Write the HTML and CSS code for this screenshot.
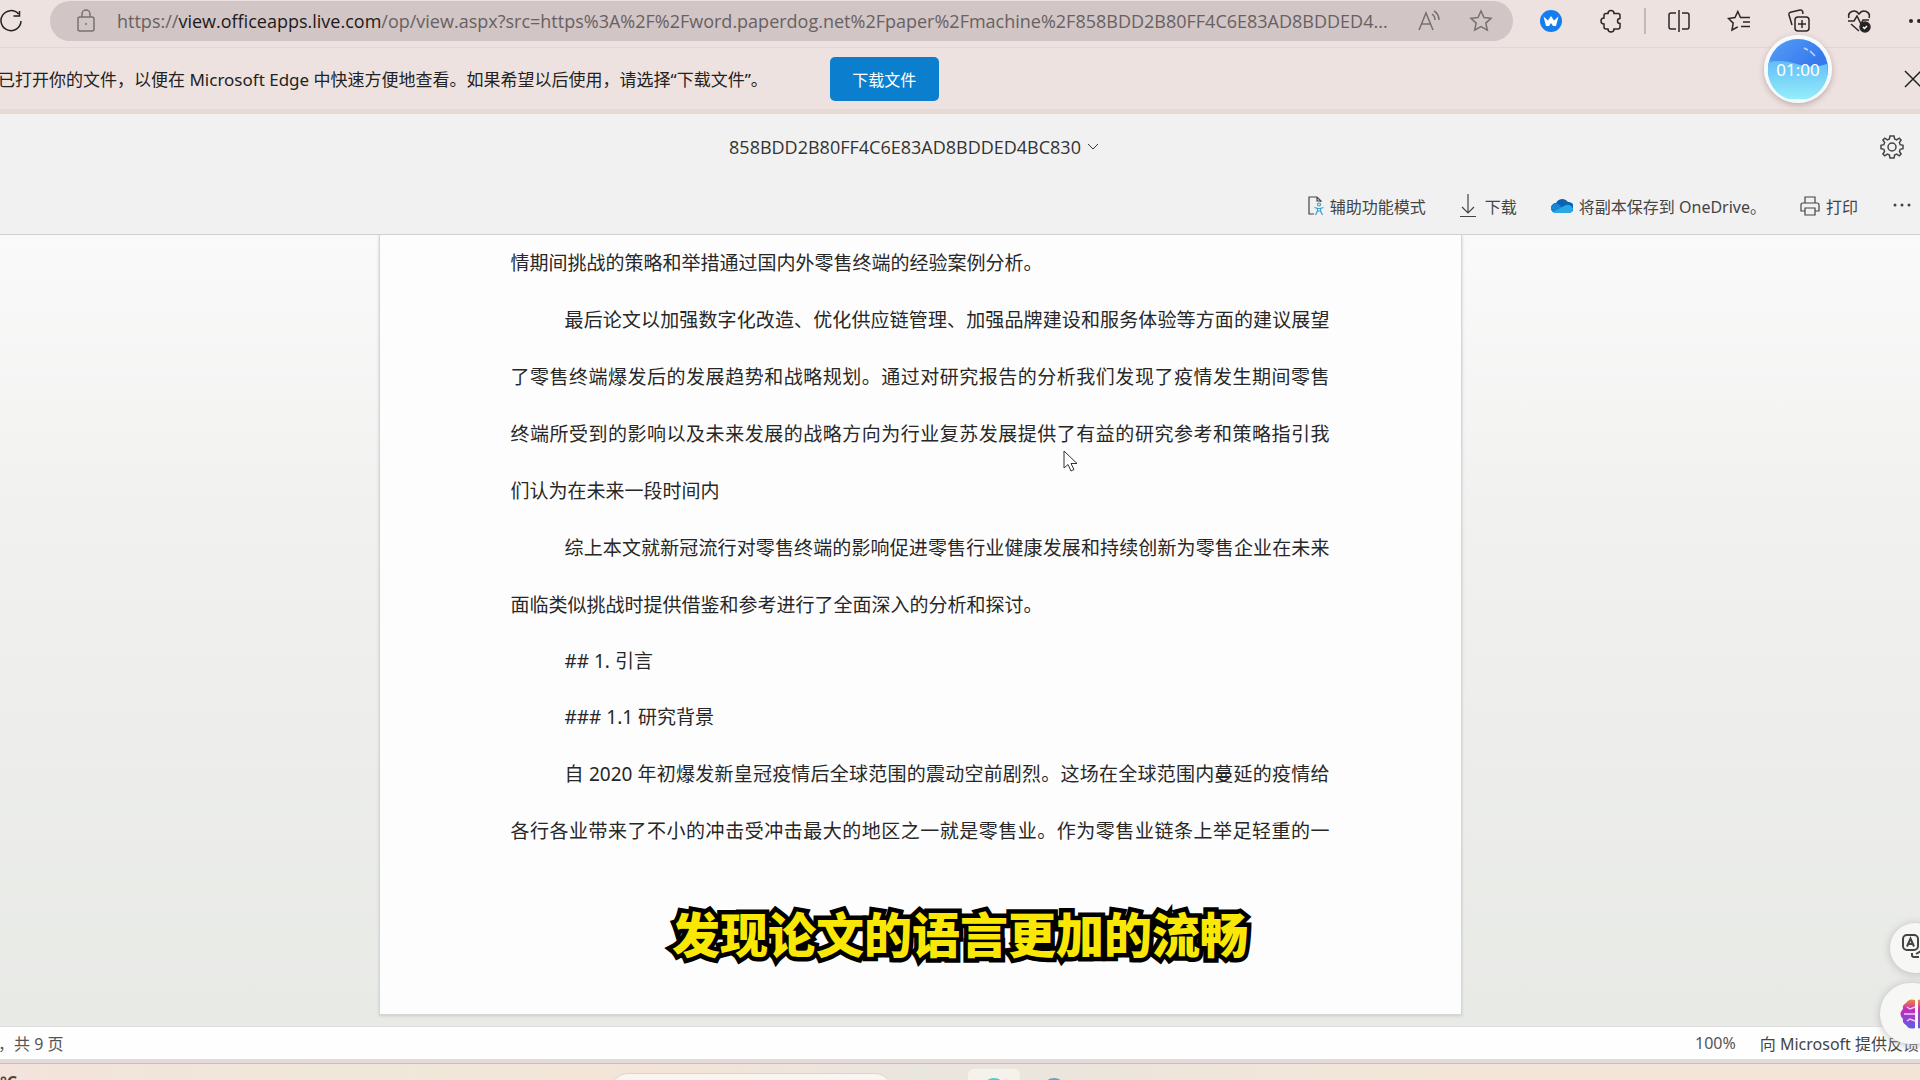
FILE: index.html
```html
<!DOCTYPE html>
<html lang="zh-CN">
<head>
<meta charset="utf-8">
<meta name="viewport" content="width=device-width, initial-scale=1">
<title>858BDD2B80FF4C6E83AD8BDDED4BC830</title>
<link rel="stylesheet" href="styles.css">
</head>
<body>
<header class="browser">
  <button class="icon-btn refresh" aria-label="刷新"><svg width="24" height="24" viewBox="0 0 24 24"><path d="M19.5 5A10 10 0 1 0 22 12M20.500 2v5h-6"/></svg></button>
  <div class="address">
    <svg class="lock" width="18" height="24" viewBox="0 0 18 24"><rect x="1" y="8" width="16" height="14" rx="2"/><path d="M5 8V5a4 4 0 0 1 8 0v3"/><circle class="dot" cx="9" cy="15" r="1"/></svg>
    <div class="url">https://<span class="host">view.officeapps.live.com</span>/op/view.aspx?src=https%3A%2F%2Fword.paperdog.net%2Fpaper%2Fmachine%2F858BDD2B80FF4C6E83AD8BDDED4...</div>
    <button class="icon-btn" aria-label="朗读此页内容"><svg width="24" height="24" viewBox="0 0 24 24"><path d="M2 21 9 4l7 17M5 15h8M15 5q3 2 3 6M17 2q5 3 5 9"/></svg></button>
    <button class="icon-btn" aria-label="收藏此页"><svg width="24" height="24" viewBox="0 0 24 24"><path d="m12 2 3 6.500 7 .8-5.200 4.800 1.500 7L12 17.600l-6.300 3.500 1.500-7L2 9.300l7-.8z"/></svg></button>
  </div>
  <nav class="tools" aria-label="浏览器工具">
    <button class="icon-btn" aria-label="扩展 W"><svg width="24" height="24" viewBox="0 0 24 24"><circle cx="12" cy="12" r="11" fill="#147df0" stroke="none"/><path d="M4.500 7.500 7 17h3l2-3 2 3h3l2.500-9.500-4.500 4L12 7l-3 4.500z" fill="#fff" stroke="none"/></svg></button>
    <button class="icon-btn" aria-label="扩展"><svg width="24" height="24" viewBox="0 0 24 24"><path d="M9 4.500a3 3 0 0 1 6 0h4a2 2 0 0 1 2 2V9.500a2.500 2.500 0 0 0 0 5v3.500a2 2 0 0 1-2 2h-4a3 3 0 0 1-6 0H7a2 2 0 0 1-2-2v-3a3 3 0 0 1 0-6V6.500a2 2 0 0 1 2-2z"/></svg></button>
    <span class="divider"></span>
    <button class="icon-btn" aria-label="分屏"><svg width="24" height="24" viewBox="0 0 24 24"><path d="M9 4H4a2 2 0 0 0-2 2v12a2 2 0 0 0 2 2h5M15 4h5a2 2 0 0 1 2 2v12a2 2 0 0 1-2 2h-5M12 1v22"/></svg></button>
    <button class="icon-btn" aria-label="收藏夹"><svg width="24" height="24" viewBox="0 0 24 24"><path d="M15 8.500h-1.500L10.800 2.500 8 8.500l-6.500 1 4.700 4.600L5 21l5.800-3.200M15 8.500h8M16 13h7M14 17.500h9"/></svg></button>
    <button class="icon-btn" aria-label="集锦"><svg width="24" height="24" viewBox="0 0 24 24"><rect x="8" y="8" width="14" height="14" rx="3"/><path d="M15 11v8M11 15h8M5 16 2 6q-.5-2 1.500-2.700L13 1q2-.4 2.600 1.500L16 5"/></svg></button>
    <button class="icon-btn" aria-label="浏览器概要"><svg width="24" height="24" viewBox="0 0 24 24"><path d="M2 9C0 3 8-1 12 5c4-6 12-2 10 4M1 12h6l3-5 4 8 2-4h6M4 15l8 7"/><circle cx="18" cy="18" r="5" fill="#222"/><path d="m16 18 1.500 1.500L20 17" stroke="#fff"/></svg></button>
    <button class="icon-btn" aria-label="更多"><svg width="24" height="24" viewBox="0 0 24 24"><g class="dot"><circle cx="4" cy="12" r="2"/><circle cx="12" cy="12" r="2"/><circle cx="20" cy="12" r="2"/></g></svg></button>
  </nav>
</header>
<section class="notice">
  <p class="notice-text">已打开你的文件，以便在 Microsoft Edge 中快速方便地查看。如果希望以后使用，请选择“下载文件”。</p>
  <button class="primary">下载文件</button>
  <button class="icon-btn close" aria-label="关闭"><svg width="20" height="20" viewBox="0 0 20 20"><path d="m2 2 16 16M18 2 2 18"/></svg></button>
</section>
<section class="viewer-head">
  <div class="title-row">
    <button class="doc-title">858BDD2B80FF4C6E83AD8BDDED4BC830<svg width="12" height="8" viewBox="0 0 12 8"><path d="m1 1 5 5 5-5"/></svg></button>
    <button class="icon-btn gear" aria-label="设置"><svg width="24" height="24" viewBox="0 0 24 24"><path d="m10 1-.6 3-2 .9-2.700-1.700L2.900 5l1.700 2.700-.8 2L1 10.300v3.400l2.800.6.8 2L2.900 19l1.800 1.800 2.700-1.700 2 .9.600 3h4l.6-3 2-.9 2.700 1.700 1.800-1.800-1.700-2.700.8-2 2.800-.6v-3.400l-2.800-.6-.8-2L21.100 5l-1.800-1.800-2.700 1.700-2-.9L14 1z"/><circle cx="12" cy="12" r="4"/></svg></button>
  </div>
  <div class="command-row">
    <button class="command"><svg width="16" height="20" viewBox="0 0 16 20"><path d="M6 18H1V1h8l4 4v1M9 1v4h4"/><g stroke="#3a9fd0"><circle cx="11" cy="8.500" r="1.500"/><path d="m6.500 11.500 3 1v2.500l-2 4M15.500 11.500l-3 1v2.500l2 4M9.500 12.500h3M9.500 15h3"/></g></svg>辅助功能模式</button>
    <button class="command download"><svg width="16" height="24" viewBox="0 0 16 24"><path d="M8 0v19M2 13l6 6 6-6M0 22.500h16"/></svg>下载</button>
    <button class="command"><svg width="22" height="16" viewBox="0 0 22 16"><g stroke="none"><path d="M5 15a5 5 0 0 1 0-10 7 7 0 0 1 12-1 5.500 5.500 0 0 1 1 11z" fill="#0b63b5"/><path d="M0 10a5 5 0 0 1 7-4l11 9H5a5 5 0 0 1-5-5" fill="#1486d5"/><path d="M2 14 14 7.500A5.500 5.500 0 0 1 22 11q-.5 4-4.500 4H5q-2 0-3-1" fill="#2aa8e4"/></g></svg>将副本保存到 OneDrive。</button>
    <button class="command"><svg width="20" height="20" viewBox="0 0 20 20"><path d="M5 7V1h10v6M5 15H1V9q0-2 2-2h14q2 0 2 2v6h-4M5 12h10v7H5z"/></svg>打印</button>
    <button class="command" aria-label="更多命令"><svg width="20" height="20" viewBox="0 0 20 20"><g class="dot"><circle cx="3" cy="9" r="1.500"/><circle cx="10" cy="9" r="1.500"/><circle cx="17" cy="9" r="1.500"/></g></svg></button>
  </div>
</section>
<main class="canvas">
  <article class="sheet">
    <p>情期间挑战的策略和举措通过国内外零售终端的经验案例分析。</p>
    <p class="indent"><span class="full">最后论文以加强数字化改造、优化供应链管理、加强品牌建设和服务体验等方面的建议展望</span><span class="full">了零售终端爆发后的发展趋势和战略规划。通过对研究报告的分析我们发现了疫情发生期间零售</span><span class="full">终端所受到的影响以及未来发展的战略方向为行业复苏发展提供了有益的研究参考和策略指引我</span><span class="last">们认为在未来一段时间内</span></p>
    <p class="indent"><span class="full">综上本文就新冠流行对零售终端的影响促进零售行业健康发展和持续创新为零售企业在未来</span><span class="last">面临类似挑战时提供借鉴和参考进行了全面深入的分析和探讨。</span></p>
    <p class="indent heading"><span>## 1. 引言</span></p>
    <p class="indent heading"><span>### 1.1 研究背景</span></p>
    <p class="indent"><span class="full">自 2020 年初爆发新皇冠疫情后全球范围的震动空前剧烈。这场在全球范围内蔓延的疫情给</span><span class="full">各行各业带来了不小的冲击受冲击最大的地区之一就是零售业。作为零售业链条上举足轻重的一</span></p>
  </article>
</main>
<footer class="status">
  <span class="pages">，共 9 页</span>
  <span>100%</span>
  <a class="feedback" href="#feedback">向 Microsoft 提供反馈</a>
</footer>
<div class="taskbar">
  <span class="weather">°C</span>
  <div class="search"></div>
  <div class="app active"><i class="cyan"></i></div>
  <div class="app"><i class="blue"></i></div>
</div>
<div class="timer"><svg class="wave" width="60" height="60" viewBox="0 0 60 60"><defs><linearGradient id="sky" x2="1" y2="1"><stop offset="0" stop-color="#56a0f6"/><stop offset=".6" stop-color="#3678ee"/></linearGradient><linearGradient id="sea" x2="0" y2="1"><stop offset="0" stop-color="#63bdf6"/><stop offset="1" stop-color="#96f0fb"/></linearGradient></defs><g stroke="none"><circle cx="30" cy="30" r="30" fill="url(#sky)"/><path d="M1 23q14-3 28 2t30 0A30 30 0 1 1 1 23" fill="url(#sea)"/></g><path d="m36 9 4 2M42 12l5 5" stroke="#b8dcff"/></svg><span>01:00</span></div>
<div class="caption">发现论文的语言更加的流畅</div>
<svg class="cursor" width="15" height="22" viewBox="0 0 15 22"><path d="M1 1v17l4-3.500 3 6.500 3-1.500-3-6h6z" fill="#fff" stroke="#333"/></svg>
<button class="float translate" aria-label="翻译"><svg width="28" height="28" viewBox="0 0 28 28"><rect x="1" y="1" width="15" height="15" rx="4"/><path d="m5 12.500 3.500-8 3.500 8M6 10h5M10 19v2q0 2 2 2h5M14 20l5-3"/></svg></button>
<button class="float brain" aria-label="助手"><svg width="34" height="30" viewBox="0 0 34 30"><defs><linearGradient id="brainFill" x1="0" y1="0" x2="0" y2="1"><stop offset="0" stop-color="#ef8a32"/><stop offset=".35" stop-color="#c22bbb"/><stop offset="1" stop-color="#5b5ee8"/></linearGradient></defs><g fill="url(#brainFill)" stroke="none"><path d="M15 1v28Q9 31 6 26q-4-2-3-6-5-5 0-10-1-4 3-6 3-5 9-3"/><path d="M18 1v28q7 2 10-3 4-2 3-6 5-5 0-10 1-4-3-6-3-5-10-3"/></g><path d="M4 15h11M7 8l3 2 5-2M7 22l3-2 5 2" stroke="#f5c8f4"/></svg></button>
</body>
</html>
```
FILE: styles.css
```css
* { box-sizing: border-box; }
html { height: 100%; }
body {
  position: relative;
  display: flex;
  flex-direction: column;
  height: 100%;
  margin: 0;
  overflow: hidden;
  color: #222;
  background: #f1f1f1;
  font-family: "Noto Sans", "Noto Sans CJK SC", sans-serif;
  font-size: 16px;
}
button { padding: 0; border: 0; background: none; color: inherit; font: inherit; }
p { margin: 0; }
svg { display: block; flex: none; fill: none; stroke: currentColor; stroke-width: 1.5; }
.dot { fill: currentColor; stroke: none; }
.icon-btn { flex: none; }

.browser {
  display: flex;
  align-items: center;
  flex: none;
  height: 48px;
  padding-bottom: 6px;
  background: #eee2e0;
  border-bottom: 1px solid #e3d7d5;
}
.refresh { margin-left: -1px; }
.address {
  display: flex;
  align-items: center;
  flex: 1;
  min-width: 0;
  height: 40px;
  margin-left: 27px;
  padding: 0 20px 0 27px;
  gap: 28px;
  border-radius: 20px;
  background: #d1c5c5;
  color: #777071;
}
.lock { margin-right: -6px; }
.url { flex: 1; min-width: 0; margin-right: -16px; overflow: hidden; white-space: nowrap; font-family: "Open Sans", sans-serif; font-size: 18px; color: #686162; }
.host { color: #1d191a; }
.tools { display: flex; align-items: center; gap: 36px; margin: 0 -11px 0 26px; color: #2c2727; }
.divider { width: 2px; height: 26px; margin: 0 -15px; background: #c2b8b7; }

.notice {
  display: flex;
  align-items: center;
  flex: none;
  height: 66px;
  background: #eee2e0;
  border-bottom: 5px solid #e6dad5;
}
.notice-text { margin-left: -2px; font-size: 17px; white-space: nowrap; }
.primary { width: 109px; height: 44px; margin-left: 62px; border-radius: 5px; background: #0b7fcd; color: #fff; }
.close { margin-left: auto; margin-right: -3px; }

.viewer-head { flex: none; height: 121px; border-bottom: 1px solid #d0d0d0; background: #f1f1f1; color: #444; }
.title-row { display: flex; align-items: center; justify-content: center; height: 66px; }
.doc-title { display: flex; align-items: center; gap: 6px; margin: 0 auto; color: #333; font-family: "Open Sans", sans-serif; font-size: 18px; }
.doc-title svg { stroke-width: 1; }
.gear { margin: 0 16px 0 52px; }
.command-row { display: flex; align-items: center; justify-content: flex-end; gap: 34px; height: 52px; padding-right: 8px; }
.command { display: flex; align-items: center; gap: 6px; white-space: nowrap; }
.command svg { stroke-width: 1.2; }
.download { gap: 9px; }

.canvas {
  display: flex;
  justify-content: center;
  flex: 1;
  min-height: 0;
  padding: 0 80px 11px 0;
  overflow: hidden;
  background: linear-gradient(#fafafa, #f1f1f0 35%, #e8eae6);
}
.sheet {
  width: 1083px;
  max-width: 100%;
  padding: 0 131px;
  overflow: hidden;
  background: #fdfdfd;
  border: 1px solid #d5d5d5;
  border-top: 0;
  box-shadow: 0 1px 3px #ccc;
  font-size: 19px;
  line-height: 57px;
  color: #272727;
}
.sheet p { white-space: nowrap; }
.sheet .heading { margin-top: -1px; }
.sheet span { display: block; }
.full { text-align: justify; text-align-last: justify; text-justify: inter-character; white-space: normal; }
.indent span:first-child { padding-left: 54px; }

.status {
  display: flex;
  align-items: center;
  flex: none;
  height: 33px;
  gap: 24px;
  background: #fefefe;
  border-top: 1px solid #ddd;
  color: #555;
  white-space: nowrap;
}
.pages { margin: 0 auto 0 -2px; }
.feedback { margin-right: 1px; color: #444; text-decoration: none; }

.taskbar {
  display: flex;
  align-items: flex-start;
  flex: none;
  height: 21px;
  padding-top: 6px;
  overflow: hidden;
  border-top: 4px solid #e5dada;
  background: linear-gradient(90deg, #f3e3dc, #efe8da 20%, #f4e4d8 34%, #e9e5df 48%, #f3e6d8 75%, #f3e4d8);
  box-shadow: inset 0 1px #c9bfbc;
}
.weather { width: 610px; padding-top: 5px; line-height: 16px; font-weight: 700; color: #4e4542; }
.search { width: 283px; height: 36px; margin-top: 4px; border: 1px solid #ddd4cb; border-radius: 18px; background: #faf5f1; }
.app { width: 52px; height: 40px; padding: 9px 14px; border-radius: 6px; }
.active { margin-left: 75px; background: #f5f1eb; }
.app i { display: block; width: 24px; height: 24px; border-radius: 12px; }
.cyan { background: #42d1d9; }
.blue { background: #689fd5; }
.app + .app { margin-left: 8px; }

.timer {
  position: absolute;
  top: 35px;
  right: 88px;
  display: grid;
  place-items: center;
  width: 68px;
  height: 68px;
  border: 4px solid #f4fbff;
  border-radius: 50%;
  box-shadow: 0 2px 6px #b9aaaa;
  color: #fff;
  font-size: 17px;
}
.timer > * { grid-area: 1 / 1; }
.caption {
  position: absolute;
  right: 0;
  bottom: 112px;
  left: 0;
  color: #f9e806;
  font-family: "Noto Sans CJK SC", sans-serif;
  font-size: 48px;
  font-weight: 900;
  line-height: 72px;
  text-align: center;
  -webkit-text-stroke: 9px #000;
  paint-order: stroke fill;
}
.cursor { position: absolute; top: 450px; left: 1063px; stroke-width: 1; }
.float { position: absolute; display: flex; align-items: center; background: #f7f7f6; box-shadow: 0 1px 8px #bbb; color: #444; }
.translate { right: -20px; bottom: 107px; width: 50px; height: 50px; padding-left: 12px; border-radius: 25px; }
.translate svg { stroke-width: 2; }
.brain { right: -24px; bottom: 36px; width: 64px; height: 61px; padding-left: 20px; border-radius: 31px; }
```
